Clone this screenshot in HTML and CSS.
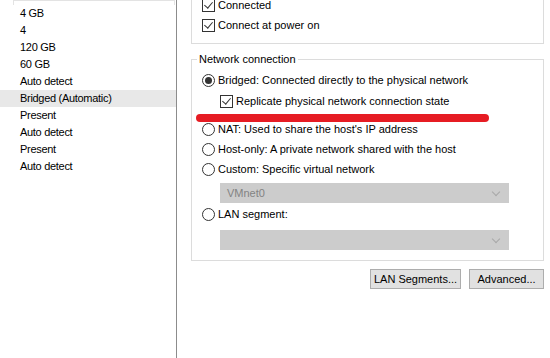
FILE: index.html
```html
<!DOCTYPE html>
<html>
<head>
<meta charset="utf-8">
<link rel="stylesheet" href="styles.css">
</head>
<body>
<div class="app">
  <div class="list">
    <div class="list-head"></div>
    <div class="row">4 GB</div>
    <div class="row">4</div>
    <div class="row">120 GB</div>
    <div class="row">60 GB</div>
    <div class="row">Auto detect</div>
    <div class="row sel">Bridged (Automatic)</div>
    <div class="row">Present</div>
    <div class="row">Auto detect</div>
    <div class="row">Present</div>
    <div class="row">Auto detect</div>
  </div>
  <div class="pane">
    <div class="topbox">
      <div class="opt"><span class="chk on"></span>Connected</div>
      <div class="opt"><span class="chk on"></span>Connect at power on</div>
    </div>
    <fieldset class="group">
      <legend>Network connection</legend>
      <div class="opt"><span class="rad on"></span>Bridged: Connected directly to the physical network</div>
      <div class="opt sub"><span class="chk on"></span>Replicate physical network connection state</div>
      <div class="opt gap"><span class="rad"></span>NAT: Used to share the host's IP address</div>
      <div class="opt"><span class="rad"></span>Host-only: A private network shared with the host</div>
      <div class="opt"><span class="rad"></span>Custom: Specific virtual network</div>
      <div class="combo"><span class="val">VMnet0</span><span class="arrow"></span></div>
      <div class="opt"><span class="rad"></span>LAN segment:</div>
      <div class="combo c2"><span class="val"></span><span class="arrow"></span></div>
      <div class="mark"></div>
    </fieldset>
    <div class="buttons">
      <div class="btn b1">LAN Segments...</div>
      <div class="btn b2">Advanced...</div>
    </div>
  </div>
</div>
</body>
</html>
```

FILE: styles.css
```css
html, body {
  margin: 0;
  padding: 0;
  background: #ffffff;
}
body {
  font-family: "Liberation Sans", Arial, sans-serif;
  font-size: 11px;
  color: #000;
  width: 550px;
  height: 358px;
  overflow: hidden;
}
.app {
  display: flex;
  height: 358px;
}
.list {
  width: 176px;
  border-right: 1px solid #8c8c8c;
  flex: none;
}
.list-head {
  margin: 0 1px 0 13px;
  border: 1px solid #e3e3e3;
  border-bottom: none;
  box-sizing: border-box;
  height: 5px;
}
.row {
  height: 17px;
  line-height: 17px;
  padding-left: 20px;
  white-space: nowrap;
  letter-spacing: -0.3px;
}
.row.sel {
  background: #e8e8e8;
}
.pane {
  flex: 1;
  padding: 0 6px 0 14px;
  display: flex;
  flex-direction: column;
}
.topbox {
  border: 1px solid #dcdcdc;
  border-top: none;
  margin-top: -5px;
  padding: 0 0 8px 10px;
}
.opt {
  display: flex;
  align-items: center;
  height: 20px;
  white-space: nowrap;
}
.chk, .rad {
  width: 13px;
  height: 13px;
  box-sizing: border-box;
  border: 1px solid #333;
  background: #fff;
  flex: none;
  margin-right: 3px;
  position: relative;
}
.rad {
  border-radius: 50%;
}
.rad.on::after {
  content: "";
  position: absolute;
  left: 2px;
  top: 2px;
  width: 7px;
  height: 7px;
  border-radius: 50%;
  background: #333;
}
.chk.on::after {
  content: "";
  position: absolute;
  left: 3px;
  top: 0px;
  width: 4px;
  height: 7px;
  border: solid #333;
  border-width: 0 1.5px 1.5px 0;
  transform: rotate(40deg);
}
.group {
  position: relative;
  margin: 7px 0 0 0;
  border: 1px solid #dcdcdc;
  padding: 3px 0 9px 10px;
}
.group legend {
  padding: 0 2px;
  margin-left: -5px;
  line-height: 16px;
}
.sub {
  margin-left: 18px;
  margin-top: 1px;
}
.gap {
  margin-top: 8px;
}
.combo {
  margin: 4px 0 1px 18px;
  width: 289px;
  height: 20px;
  background: #cccccc;
  display: flex;
  align-items: center;
  justify-content: space-between;
  padding: 0 10px 0 7px;
  box-sizing: border-box;
  color: #838383;
}
.combo.c2 {
  margin-top: 6px;
}
.arrow {
  width: 5px;
  height: 5px;
  border: solid #a8a8a8;
  border-width: 0 1px 1px 0;
  transform: rotate(45deg);
  margin-top: -3px;
}
.mark {
  position: absolute;
  left: 4px;
  top: 47px;
  width: 293px;
  height: 8px;
  border-radius: 4px;
  background: #e61c23;
}
.buttons {
  display: flex;
  justify-content: flex-end;
  gap: 8px;
  margin-top: 8px;
}
.btn {
  height: 20px;
  box-sizing: border-box;
  border: 1px solid #adadad;
  background: #e1e1e1;
  display: flex;
  align-items: center;
  justify-content: center;
  white-space: nowrap;
}
.b1 { width: 91px; }
.b2 { width: 75px; }
```
